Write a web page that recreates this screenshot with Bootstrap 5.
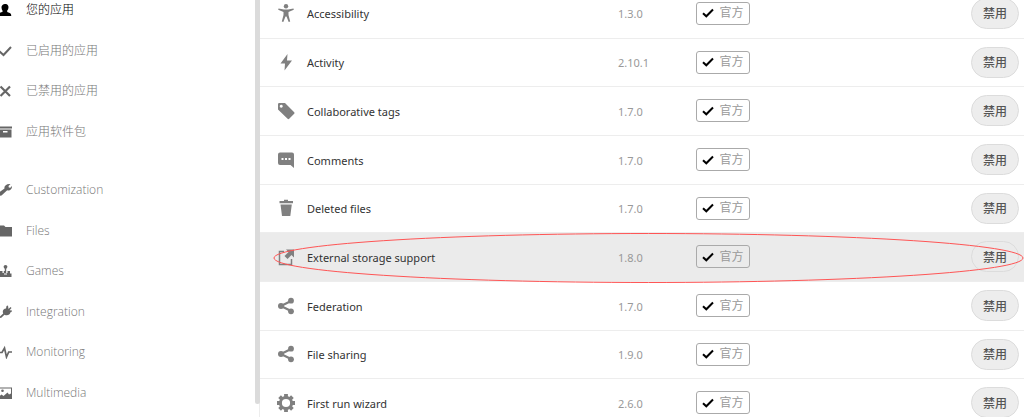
<!DOCTYPE html>
<html lang="zh-CN">
<head>
<meta charset="utf-8">
<meta name="viewport" content="width=device-width, initial-scale=1">
<title>应用</title>
<link href="https://cdn.jsdelivr.net/npm/bootstrap@5.3.0/dist/css/bootstrap.min.css" rel="stylesheet">
<style>
body { font-family: "Open Sans", "Noto Sans CJK SC", sans-serif; font-size: 12px; line-height: 18px; color: #333; }
.side { width: 255px; }
.side-menu { margin-top: -10px; }
.side-menu .nav-link { height: 40px; padding: 0; gap: 14px; color: #777; font-weight: 300; }
.side-menu .nav-item:nth-child(even) .nav-link { height: 41px; }
.side-menu .nav-link.active { color: #000; }
.side-menu .gap-above { margin-top: 18px; }
.side-menu svg { width: 12px; height: 14px; fill: #666; flex: none; }
.side-menu .active svg { fill: #000; }
.track { width: 5px; border-right: 1px solid #ededed; }
.thumb { width: 5px; height: 97%; background: #dbdbdb; border-radius: 0 0 3px 3px; }
.apps { table-layout: fixed; margin-top: -11px; }
.apps td { height: 49px; padding: 0; vertical-align: middle; border-bottom: 1px solid #ededed; }
.apps tr:nth-child(3n+2) td { height: 48px; }
.apps .picked { background: #ebebeb; }
.c-icon { width: 47px; }
.c-version { width: 78px; }
.c-level { width: 222px; }
.c-action { width: 106px; }
.apps .app-icon { padding-left: 17px; }
.app-icon svg { display: block; width: 18px; height: 18px; fill: #808080; }
.apps .app-name, .apps .version { padding-top: 2px; font-family: "Noto Sans", sans-serif; font-size: 11px; }
.apps .version { color: #999; }
.official { width: 54px; height: 23px; border: 1px solid #aaa; border-radius: 3px; color: #999; gap: 5px; }
.official svg { width: 12px; height: 10px; fill: none; stroke: #000; stroke-width: 2; }
.apps .action { padding-right: 5px; }
.btn-pill { width: 48px; height: 31px; padding: 2px 0 0; border: 1px solid #dcdcdc; border-radius: 16px; background: #ededed; color: #555; font-size: 12px; line-height: 18px; font-weight: 500; }
.btn-pill:hover { border-color: #999; }
.picked .btn-pill { background: #ebebeb; }
.ring { left: 13px; top: 1px; width: calc(100% - 13px); height: 50px; pointer-events: none; }
</style>
</head>
<body>
<svg class="d-none" aria-hidden="true">
<symbol id="user" viewBox="0 0 12 14"><path d="M5 1C7 .5 8.500 2 8.500 4S7.800 7 7.200 7.500V9c1.500.5 4 1 4 3v1H-2v-1c0-2 2.500-2.500 4.500-3V7.500C2 7 1.500 5.500 1.500 4S3 1 5 1z"/></symbol>
<symbol id="check" viewBox="0 0 12 14"><path d="M-1 7 3.500 11 11 3" fill="none" stroke="#666" stroke-width="2"/></symbol>
<symbol id="cross" viewBox="0 0 12 14"><path d="M.5 2.500l9.500 9.500M10 2.500.5 12" fill="none" stroke="#666" stroke-width="2.200"/></symbol>
<symbol id="box" viewBox="0 0 12 14"><path d="M-1 1.500h13v2H-1zM-1 4.500h12.500v8H-1z"/><path d="M3 6h4.500v1.500H3z" fill="#fff"/></symbol>
<symbol id="wrench" viewBox="0 0 12 14"><path d="M10.500 1 8.500 3l.3 1.500 1.500.3L12 3c.2 2.800-1.800 5.200-4.800 4.200L1.500 12.500-1 13V9.500l5.500-4C3.800 2.800 6.800.3 10.500 1z"/></symbol>
<symbol id="folder" viewBox="0 0 12 14"><path d="M-2 1.500h6L5.500 3H12V12.500H-2z"/></symbol>
<symbol id="joystick" viewBox="0 0 12 14"><circle cx="5.500" cy="2.800" r="1.900"/><path d="M4.800 4h1.400v5h1.300V7h2.500v2.500h1.500V13H-1V9.500h1V7h2.500v2h1.300V7h1z"/><path d="M4 9.500h3v1H4z" fill="#fff"/></symbol>
<symbol id="plug" viewBox="0 0 12 14"><path d="M6.500 1 8 .5 8.500 4 10.500 2l1 1-2 2.300 2.500.2-.5 1.500-1 .3C10 10 7 11 4.500 9.700L1 13-1 12.500 3.200 8.500C2 6 3.500 3.700 6 3.500z"/></symbol>
<symbol id="pulse" viewBox="0 0 12 14"><path d="M-1 7.500h3L4.500 3l2 9L8.700 7H12" fill="none" stroke="#666" stroke-width="1.700"/></symbol>
<symbol id="photo" viewBox="0 0 12 14"><path fill-rule="evenodd" d="M-2 1.500h14v11.500H-2zM-1 2.500v8l2.500-2 2 1.500L7.500 6.500 9 8.500l2-1v-5z"/><circle cx="2.500" cy="4.800" r="1.300"/></symbol>
<symbol id="access" viewBox="0 0 18 18"><circle cx="9" cy="2.300" r="2.200"/><path d="M1.500 4.500 7 5.500h4l5.500-1 .3 1.300L11.500 8v3l1.700 6.500-1.500.5L9.500 12.500h-1L6.300 18l-1.500-.5L6.500 11V8L1.200 5.800z"/></symbol>
<symbol id="bolt" viewBox="0 0 18 18"><path d="M10.500 1 3.500 10.500H8L7.500 17.500 15 7.500H10z"/></symbol>
<symbol id="tag" viewBox="0 0 18 18"><path fill-rule="evenodd" d="M1 2.200Q1 1 2.200 1H8l9.200 9.200q.8.800 0 1.600l-5 5q-.8.800-1.600 0L1 7.500zM4.200 2.700a1.500 1.500 0 1 0 .1 0z"/></symbol>
<symbol id="comment" viewBox="0 0 18 18"><path d="M3 1.500h12q2 0 2 2v13.500L13.500 14H3q-2 0-2-2V3.500q0-2 2-2z"/><path d="M4.500 7h2v2h-2zM8 7h2v2H8zM11.500 7h2v2h-2z" fill="#fff"/></symbol>
<symbol id="trash" viewBox="0 0 18 18"><path d="M7 .8h4V2h5v2.300H2.500V2H7zM3.500 5.500h11.300L13.300 17H5z"/></symbol>
<symbol id="external" viewBox="0 0 18 18"><path d="M7 3.500H2.500v13h12V11" fill="none" stroke="#808080" stroke-width="1.500"/><path d="M9 1.500h8v8l-2.500-2.500-4 4-3-3 4-4z"/></symbol>
<symbol id="share" viewBox="0 0 18 18"><path d="M14 4 4 9l10 5" fill="none" stroke="#808080" stroke-width="2.200"/><circle cx="14" cy="3.700" r="2.900"/><circle cx="4" cy="9" r="3"/><circle cx="14" cy="14.300" r="2.900"/></symbol>
<symbol id="gear" viewBox="0 0 18 18"><circle cx="9" cy="9" r="5.600" fill="none" stroke="#808080" stroke-width="3"/><path d="M9 0v3M9 15v3M0 9h3M15 9h3M2.600 2.600l2.200 2.200M13.200 13.200l2.200 2.200M2.600 15.400l2.200-2.200M13.200 4.800l2.200-2.200" stroke="#808080" stroke-width="3.800"/></symbol>
<symbol id="tick" viewBox="0 0 12 10"><path d="M1 5.200 4.300 8.300 11 1.500"/></symbol>
</svg>

<div class="d-flex vh-100 overflow-hidden">
  <nav class="side flex-shrink-0">
    <ul class="nav flex-column side-menu">
      <li class="nav-item"><a class="nav-link active d-flex align-items-center" href="#"><svg><use href="#user"/></svg>您的应用</a></li>
      <li class="nav-item"><a class="nav-link d-flex align-items-center" href="#"><svg><use href="#check"/></svg>已启用的应用</a></li>
      <li class="nav-item"><a class="nav-link d-flex align-items-center" href="#"><svg><use href="#cross"/></svg>已禁用的应用</a></li>
      <li class="nav-item"><a class="nav-link d-flex align-items-center" href="#"><svg><use href="#box"/></svg>应用软件包</a></li>
      <li class="nav-item gap-above"><a class="nav-link d-flex align-items-center" href="#"><svg><use href="#wrench"/></svg>Customization</a></li>
      <li class="nav-item"><a class="nav-link d-flex align-items-center" href="#"><svg><use href="#folder"/></svg>Files</a></li>
      <li class="nav-item"><a class="nav-link d-flex align-items-center" href="#"><svg><use href="#joystick"/></svg>Games</a></li>
      <li class="nav-item"><a class="nav-link d-flex align-items-center" href="#"><svg><use href="#plug"/></svg>Integration</a></li>
      <li class="nav-item"><a class="nav-link d-flex align-items-center" href="#"><svg><use href="#pulse"/></svg>Monitoring</a></li>
      <li class="nav-item"><a class="nav-link d-flex align-items-center" href="#"><svg><use href="#photo"/></svg>Multimedia</a></li>
    </ul>
  </nav>
  <div class="track flex-shrink-0"><div class="thumb"></div></div>
  <main class="flex-grow-1">
    <table class="apps w-100">
      <colgroup><col class="c-icon"><col><col class="c-version"><col class="c-level"><col class="c-action"></colgroup>
      <tbody>
        <tr><td class="app-icon"><svg><use href="#access"/></svg></td><td class="app-name">Accessibility</td><td class="version">1.3.0</td><td><span class="official d-flex align-items-center justify-content-center"><svg><use href="#tick"/></svg>官方</span></td><td class="action text-end"><button type="button" class="btn btn-pill">禁用</button></td></tr>
        <tr><td class="app-icon"><svg><use href="#bolt"/></svg></td><td class="app-name">Activity</td><td class="version">2.10.1</td><td><span class="official d-flex align-items-center justify-content-center"><svg><use href="#tick"/></svg>官方</span></td><td class="action text-end"><button type="button" class="btn btn-pill">禁用</button></td></tr>
        <tr><td class="app-icon"><svg><use href="#tag"/></svg></td><td class="app-name">Collaborative tags</td><td class="version">1.7.0</td><td><span class="official d-flex align-items-center justify-content-center"><svg><use href="#tick"/></svg>官方</span></td><td class="action text-end"><button type="button" class="btn btn-pill">禁用</button></td></tr>
        <tr><td class="app-icon"><svg><use href="#comment"/></svg></td><td class="app-name">Comments</td><td class="version">1.7.0</td><td><span class="official d-flex align-items-center justify-content-center"><svg><use href="#tick"/></svg>官方</span></td><td class="action text-end"><button type="button" class="btn btn-pill">禁用</button></td></tr>
        <tr><td class="app-icon"><svg><use href="#trash"/></svg></td><td class="app-name">Deleted files</td><td class="version">1.7.0</td><td><span class="official d-flex align-items-center justify-content-center"><svg><use href="#tick"/></svg>官方</span></td><td class="action text-end"><button type="button" class="btn btn-pill">禁用</button></td></tr>
        <tr class="picked position-relative"><td class="app-icon"><svg><use href="#external"/></svg></td><td class="app-name">External storage support</td><td class="version">1.8.0</td><td><span class="official d-flex align-items-center justify-content-center"><svg><use href="#tick"/></svg>官方</span></td><td class="action text-end"><button type="button" class="btn btn-pill">禁用</button><svg class="ring position-absolute" viewBox="0 0 752 50" preserveAspectRatio="none"><ellipse cx="376" cy="25" rx="375" ry="24.500" fill="none" stroke="#f55" vector-effect="non-scaling-stroke"/></svg></td></tr>
        <tr><td class="app-icon"><svg><use href="#share"/></svg></td><td class="app-name">Federation</td><td class="version">1.7.0</td><td><span class="official d-flex align-items-center justify-content-center"><svg><use href="#tick"/></svg>官方</span></td><td class="action text-end"><button type="button" class="btn btn-pill">禁用</button></td></tr>
        <tr><td class="app-icon"><svg><use href="#share"/></svg></td><td class="app-name">File sharing</td><td class="version">1.9.0</td><td><span class="official d-flex align-items-center justify-content-center"><svg><use href="#tick"/></svg>官方</span></td><td class="action text-end"><button type="button" class="btn btn-pill">禁用</button></td></tr>
        <tr><td class="app-icon"><svg><use href="#gear"/></svg></td><td class="app-name">First run wizard</td><td class="version">2.6.0</td><td><span class="official d-flex align-items-center justify-content-center"><svg><use href="#tick"/></svg>官方</span></td><td class="action text-end"><button type="button" class="btn btn-pill">禁用</button></td></tr>
      </tbody>
    </table>
  </main>
</div>
<script src="https://cdn.jsdelivr.net/npm/bootstrap@5.3.0/dist/js/bootstrap.bundle.min.js"></script>
</body>
</html>
